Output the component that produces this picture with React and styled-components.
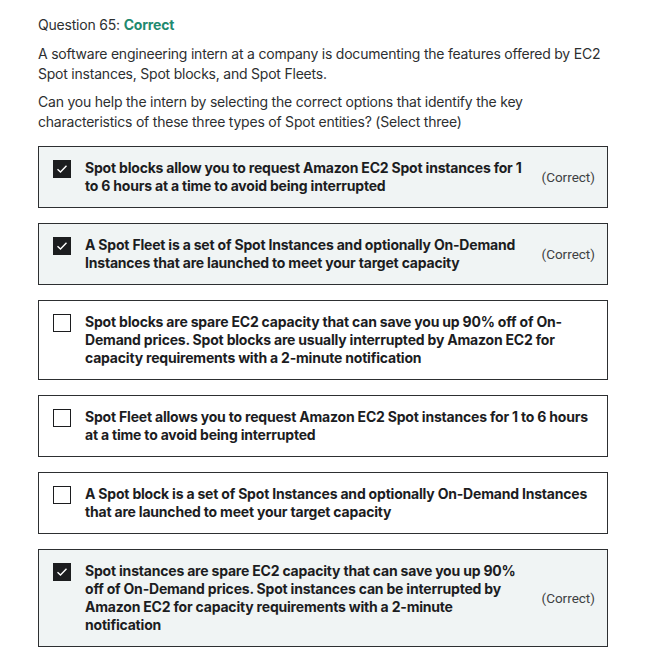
import styled, { createGlobalStyle } from 'styled-components';

const GlobalStyle = createGlobalStyle`
  body {
    margin: 0;
    background: #ffffff;
    font-family: Inter, "Noto Sans", sans-serif;
    color: #2d2f31;
  }
`;

const Page = styled.div`
  padding: 16px 39px 16px 38px;
  width: 570px;
`;

const Title = styled.div`
  font-size: 14px;
  line-height: 18px;
  letter-spacing: -0.2px;
  margin-bottom: 10px;
`;

const Status = styled.span`
  font-weight: 700;
  color: #1f8a70;
`;

const Prompt = styled.p`
  margin: 0 0 8px;
  font-size: 14px;
  line-height: 20px;
  letter-spacing: -0.22px;
`;

const AnswerList = styled.div`
  display: flex;
  flex-direction: column;
  gap: 15px;
  margin-top: 14px;
`;

const Answer = styled.div`
  display: flex;
  align-items: center;
  gap: 14px;
  padding: 12px 12px 12px 14px;
  border: 1px solid #2d2f31;
  background: ${(p) => (p.$checked ? '#f0f4f4' : '#ffffff')};
`;

const Body = styled.div`
  flex: 1;
  display: flex;
  align-items: flex-start;
  gap: 14px;
`;

const Box = styled.span`
  flex: none;
  width: 18px;
  height: 18px;
  margin-top: 1px;
  box-sizing: border-box;
  border: 1px solid #1c1d1f;
  background: ${(p) => (p.$checked ? '#1c1d1f' : '#ffffff')};
  display: flex;
  align-items: center;
  justify-content: center;
`;

const Text = styled.div`
  flex: 1;
  font-size: 14px;
  line-height: 18px;
  font-weight: 700;
  letter-spacing: -0.2px;
  color: #1c1d1f;
`;

const Verdict = styled.span`
  flex: none;
  font-size: 13.5px;
  color: #3e4143;
  font-family: Roboto, "Liberation Sans", sans-serif;
  padding-left: 1px;
`;

const answers = [
  { text: 'Spot blocks allow you to request Amazon EC2 Spot instances for 1 to 6 hours at a time to avoid being interrupted', checked: true },
  { text: 'A Spot Fleet is a set of Spot Instances and optionally On-Demand Instances that are launched to meet your target capacity', checked: true },
  { text: 'Spot blocks are spare EC2 capacity that can save you up 90% off of On-Demand prices. Spot blocks are usually interrupted by Amazon EC2 for capacity requirements with a 2-minute notification', checked: false },
  { text: 'Spot Fleet allows you to request Amazon EC2 Spot instances for 1 to 6 hours at a time to avoid being interrupted', checked: false },
  { text: 'A Spot block is a set of Spot Instances and optionally On-Demand Instances that are launched to meet your target capacity', checked: false },
  { text: 'Spot instances are spare EC2 capacity that can save you up 90% off of On-Demand prices. Spot instances can be interrupted by Amazon EC2 for capacity requirements with a 2-minute notification', checked: true },
];

function Check() {
  return (
    <svg width="12" height="10" viewBox="0 0 12 10" fill="none">
      <path d="M1.5 5.2 L4.5 8 L10.5 1.8" stroke="#ffffff" strokeWidth="1.4" />
    </svg>
  );
}

export default function App() {
  return (
    <Page>
      <GlobalStyle />
      <Title>
        Question 65: <Status>Correct</Status>
      </Title>
      <Prompt>
        A software engineering intern at a company is documenting the features offered by EC2 Spot instances, Spot blocks, and Spot Fleets.
      </Prompt>
      <Prompt>
        Can you help the intern by selecting the correct options that identify the key characteristics of these three types of Spot entities? (Select three)
      </Prompt>
      <AnswerList>
        {answers.map((a) => (
          <Answer key={a.text} $checked={a.checked}>
            <Body>
              <Box $checked={a.checked}>{a.checked && <Check />}</Box>
              <Text>{a.text}</Text>
            </Body>
            {a.checked && <Verdict>(Correct)</Verdict>}
          </Answer>
        ))}
      </AnswerList>
    </Page>
  );
}
